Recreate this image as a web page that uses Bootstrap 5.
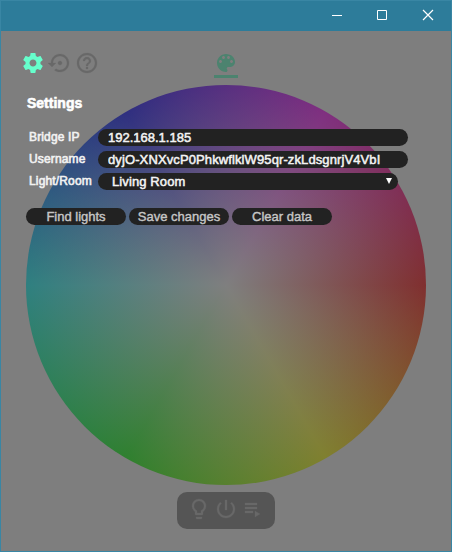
<!DOCTYPE html>
<html lang="en">
<head>
<meta charset="utf-8">
<meta name="viewport" content="width=device-width, initial-scale=1">
<title>Light control</title>
<link href="https://cdn.jsdelivr.net/npm/bootstrap@5.3.0/dist/css/bootstrap.min.css" rel="stylesheet">
<style>
body{font-family:"Liberation Sans",Arial,sans-serif;color:#f2f2f2}
.app-window{height:552px;background:#7e7e7e;border:1px solid #3986a4}
.title-bar{height:30px;flex:none;background:#2d7c9a}
.win-btn{width:46px;height:30px;color:#fff}
.top-tools{height:54px;flex:none;padding:20px 0 0 20px;display:grid;grid-template-columns:193px 24px}
.tool-icon{width:24px;height:24px;display:block;fill:currentColor}
.tool-gap{gap:3px}
.idle{color:#686868}
.active-tool{color:#66ffcc}
.palette-tab{color:#4c836f;width:24px;height:27px;border-bottom:3px solid #4c836f}
.stage{height:400px;flex:none}
.stage>*{grid-area:1/1}
.color-wheel{width:400px;height:400px;margin-left:25px;
background:radial-gradient(circle closest-side,#7f7f7f,#7f7f7f00),conic-gradient(from 90deg,#802f2f,#80802f,#2f802f,#2f8080,#2f2f80,#802f80,#802f2f)}
.settings-panel{padding:9px 0 0 25px;z-index:1}
.heading{font:bold 14px/18px "Liberation Sans",Arial,sans-serif;color:#fff;margin:0 0 17px 1px;-webkit-text-stroke:.6px}
.setting-line{height:17px;margin-bottom:5px}
.setting-label{width:72px;padding-left:3px;font:12px/16px "Liberation Sans",Arial,sans-serif;letter-spacing:.15px;flex:none;-webkit-text-stroke:.6px}
.dark-field{height:17px;width:310px;border:0;border-radius:9px;background:#222;color:#f4f4f4;font:13px/17px "Liberation Sans",Arial,sans-serif;padding:0 10px;outline:0;-webkit-text-stroke:.5px}
.spaced-text{letter-spacing:.11px}
.room-select{width:300px;padding:0 5px 0 14px}
.actions{margin-top:18px}
.action-btn{width:100px;height:17px;border:0;border-radius:9px;background:#222;color:#c6c6c6;font:13px/17px "Liberation Sans",Arial,sans-serif;padding:0;text-align:center;-webkit-text-stroke:.4px}
.bottom-tools{width:98px;height:37px;border-radius:10px;background:#555;margin:7px auto 0;padding:5px 10px;color:#686868}
.bottom-tools .tool-icon,.idle{stroke:currentColor;stroke-width:.25}
</style>
</head>
<body>
<main class="app-window d-flex flex-column overflow-hidden">
  <header class="title-bar d-flex justify-content-end">
    <svg class="win-btn" viewBox="0 0 46 30"><path d="M19 14.5h10" stroke="#fff"/></svg>
    <svg class="win-btn" viewBox="0 0 46 30"><path d="M18.500 9.500h9v9h-9z" fill="none" stroke="#fff"/></svg>
    <svg class="win-btn" viewBox="0 0 46 30"><path d="M18 9l10 10M28 9L18 19" stroke="#fff" stroke-width="1.2"/></svg>
  </header>
  <nav class="top-tools">
    <div class="d-flex tool-gap">
      <svg class="tool-icon active-tool" viewBox="0 0 24 24"><path d="M19.430 12.980c.04-.32.07-.64.07-.98s-.03-.66-.07-.98l2.110-1.650c.19-.15.24-.42.12-.64l-2-3.460c-.12-.22-.39-.3-.61-.22l-2.490 1c-.52-.4-1.080-.73-1.690-.98l-.38-2.650C14.460 2.180 14.250 2 14 2h-4c-.25 0-.46.18-.49.42l-.38 2.650c-.61.25-1.170.59-1.690.98l-2.490-1c-.23-.09-.49 0-.61.22l-2 3.460c-.13.22-.07.49.12.64l2.110 1.650c-.04.32-.07.65-.07.98s.03.66.07.98l-2.110 1.650c-.19.15-.24.42-.12.64l2 3.460c.12.22.39.3.61.22l2.490-1c.52.4 1.080.73 1.690.98l.38 2.650c.03.24.24.42.49.42h4c.25 0 .46-.18.49-.42l.38-2.650c.61-.25 1.170-.59 1.690-.98l2.490 1c.23.09.49 0 .61-.22l2-3.460c.12-.22.07-.49-.12-.64l-2.110-1.650zM12 15.500c-1.930 0-3.500-1.570-3.500-3.500s1.570-3.500 3.500-3.500 3.500 1.570 3.500 3.500-1.570 3.500-3.500 3.500z"/></svg>
      <svg class="tool-icon idle" viewBox="0 0 24 24"><path d="M14 12c0-1.100-.9-2-2-2s-2 .9-2 2 .9 2 2 2 2-.9 2-2zm-2-9c-4.970 0-9 4.030-9 9H0l4 4 4-4H5c0-3.870 3.130-7 7-7s7 3.130 7 7-3.130 7-7 7c-1.510 0-2.910-.49-4.060-1.300l-1.420 1.440C8.040 20.300 9.940 21 12 21c4.970 0 9-4.030 9-9s-4.030-9-9-9z"/></svg>
      <svg class="tool-icon idle" viewBox="0 0 24 24"><path d="M11 18h2v-2h-2v2zm1-16C6.480 2 2 6.480 2 12s4.480 10 10 10 10-4.480 10-10S17.520 2 12 2zm0 18c-4.410 0-8-3.590-8-8s3.590-8 8-8 8 3.590 8 8-3.590 8-8 8zm0-14c-2.210 0-4 1.790-4 4h2c0-1.100.9-2 2-2s2 .9 2 2c0 2-3 1.750-3 5h2c0-2.250 3-2.500 3-5 0-2.210-1.790-4-4-4z"/></svg>
    </div>
    <div class="palette-tab"><svg class="tool-icon" viewBox="0 0 24 24"><path d="M12 3c-4.970 0-9 4.030-9 9s4.030 9 9 9c.83 0 1.500-.67 1.500-1.500 0-.39-.15-.74-.39-1.010-.23-.26-.38-.61-.38-.99 0-.83.67-1.500 1.500-1.500H16c2.760 0 5-2.240 5-5 0-4.420-4.030-8-9-8zm-5.500 9c-.83 0-1.500-.67-1.500-1.500S5.670 9 6.500 9 8 9.670 8 10.500 7.330 12 6.500 12zm3-4C8.670 8 8 7.330 8 6.500S8.670 5 9.500 5s1.500.67 1.500 1.500S10.330 8 9.500 8zm5 0c-.83 0-1.500-.67-1.500-1.500S13.670 5 14.500 5s1.500.67 1.500 1.500S15.330 8 14.500 8zm3 4c-.83 0-1.500-.67-1.500-1.500S16.670 9 17.500 9s1.500.67 1.500 1.500-.67 1.500-1.500 1.500z"/></svg></div>
  </nav>
  <section class="stage d-grid">
    <div class="color-wheel rounded-circle"></div>
    <div class="settings-panel">
      <h1 class="heading">Settings</h1>
      <div class="setting-line d-flex"><label class="setting-label" for="ip">Bridge IP</label><input class="dark-field" id="ip" value="192.168.1.185"></div>
      <div class="setting-line d-flex"><label class="setting-label" for="user">Username</label><input class="dark-field spaced-text" id="user" spellcheck="false" value="dyjO-XNXvcP0PhkwflklW95qr-zkLdsgnrjV4VbI"></div>
      <div class="setting-line d-flex"><span class="setting-label">Light/Room</span><div class="dark-field room-select d-flex justify-content-between"><span class="spaced-text">Living Room</span><svg width="8" height="17" viewBox="0 0 8 17"><path d="M1 5h6l-3 6z" fill="#fff"/></svg></div></div>
      <div class="d-flex tool-gap actions">
        <button class="action-btn">Find lights</button><button class="action-btn">Save changes</button><button class="action-btn">Clear data</button>
      </div>
    </div>
  </section>
  <footer class="bottom-tools d-flex tool-gap">
    <svg class="tool-icon" viewBox="0 0 24 24"><path d="M9 21c0 .55.45 1 1 1h4c.55 0 1-.45 1-1v-1H9v1zm3-19C8.140 2 5 5.140 5 9c0 2.380 1.190 4.470 3 5.740V17c0 .55.45 1 1 1h6c.55 0 1-.45 1-1v-2.260c1.810-1.270 3-3.360 3-5.740 0-3.860-3.140-7-7-7zm2.850 11.100l-.85.6V16h-4v-2.300l-.85-.6C7.800 12.160 7 10.630 7 9c0-2.760 2.240-5 5-5s5 2.240 5 5c0 1.630-.8 3.160-2.150 4.100z"/></svg>
    <svg class="tool-icon" viewBox="0 0 24 24"><path d="M13 3h-2v10h2V3zm4.830 2.170l-1.420 1.420C17.990 7.860 19 9.810 19 12c0 3.870-3.130 7-7 7s-7-3.130-7-7c0-2.190 1.010-4.140 2.580-5.420L6.170 5.170C4.230 6.820 3 9.260 3 12c0 4.970 4.030 9 9 9s9-4.030 9-9c0-2.740-1.230-5.180-3.170-6.830z"/></svg>
    <svg class="tool-icon" viewBox="0 0 24 24"><path d="M4 10h12v2H4zM4 6h12v2H4zM4 14h8v2H4zM14 14v6l5-3z"/></svg>
  </footer>
</main>
<script src="https://cdn.jsdelivr.net/npm/bootstrap@5.3.0/dist/js/bootstrap.bundle.min.js"></script>
</body>
</html>
